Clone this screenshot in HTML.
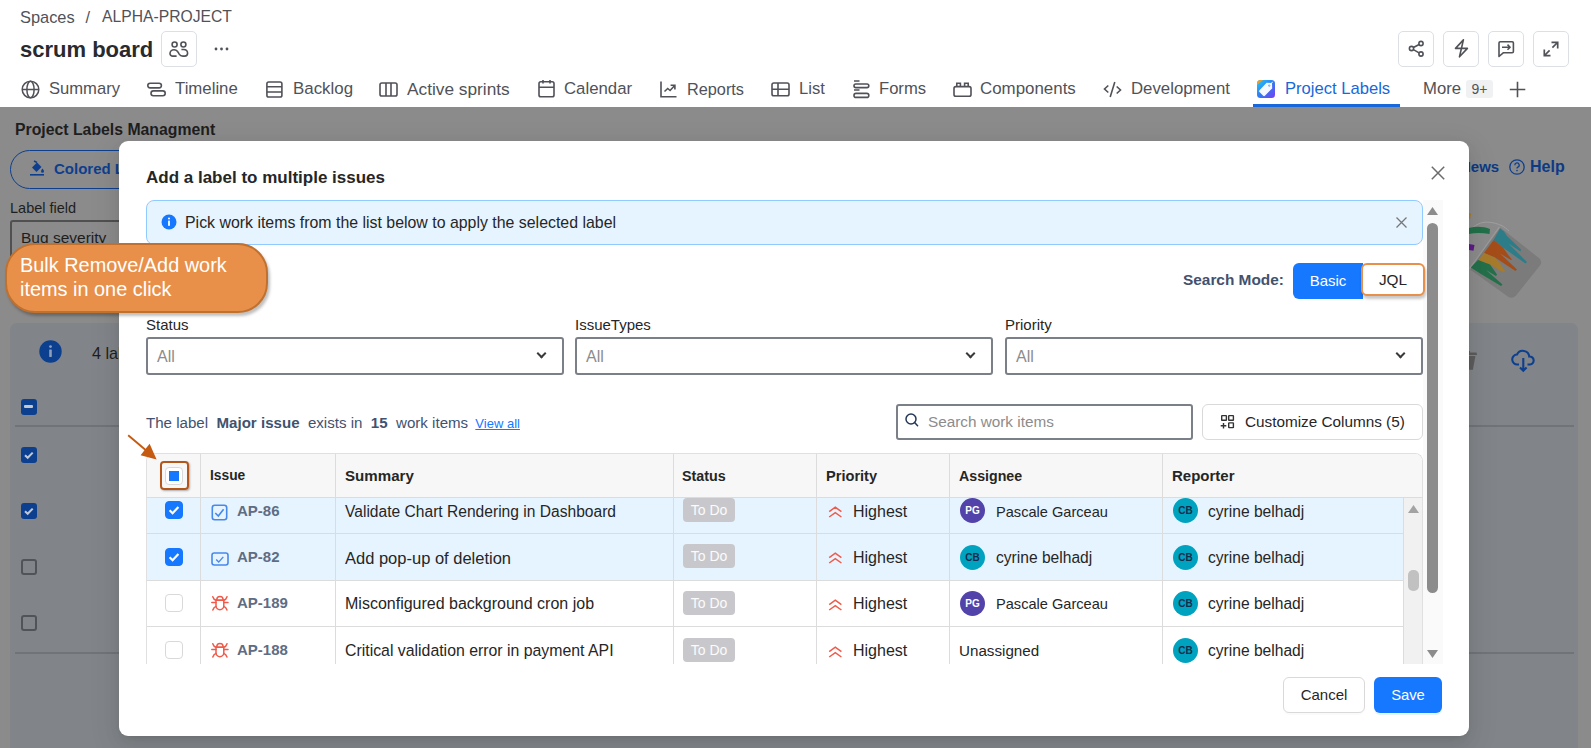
<!DOCTYPE html>
<html><head><meta charset="utf-8">
<style>
*{box-sizing:border-box;margin:0;padding:0}
html,body{width:1591px;height:748px;overflow:hidden;background:#fff}
body{position:relative;font-family:"Liberation Sans",sans-serif;color:#292a2e}
.a{position:absolute;white-space:nowrap}
.crumb{left:20px;top:7px;font-size:16.9px;color:#505258;line-height:20px}
.title{left:20px;top:37px;font-size:22px;font-weight:bold;color:#292a2e;line-height:26px}
.hbtn{width:36px;height:36px;border:1px solid #dcdfe4;border-radius:5px;background:#fff}
.hbtn svg{position:absolute;left:8px;top:8px}
.nav{top:79px;font-size:16.6px;color:#505258;line-height:20px}
.nav svg{position:absolute;top:1px}
.sel{width:418px;height:38px;border:2px solid #7b7f87;border-radius:3px;background:#fff}
.sel span{position:absolute;left:9px;top:8px;font-size:16px;color:#8c8c8c;line-height:20px}
.sel i{position:absolute;right:17px;top:11px;width:7px;height:7px;border-right:2px solid #3a3a3a;border-bottom:2px solid #3a3a3a;transform:rotate(45deg)}
.th{top:12px;font-size:15.5px;font-weight:bold;color:#262626;line-height:20px}
.td{font-size:16px;color:#262626;line-height:20px}
.key{font-size:15px;font-weight:bold;color:#5e6c84;line-height:20px}
.cb{width:18px;height:18px;border:1px solid #d9d9d9;border-radius:4px;background:#fff}
.cb.on{background:#1677ff;border-color:#1677ff}
.pill{width:52px;height:24px;background:#c8c8cc;border-radius:4px;color:#fbfbfb;font-size:14px;line-height:24px;text-align:center}
.av{width:25px;height:25px;border-radius:50%;font-size:10px;font-weight:bold;text-align:center;line-height:25px}
.pg{background:#5243aa;color:#fff}
.cbv{background:#00a3bf;color:#172b4d}
.bcb{width:15.5px;height:15.5px;background:#0d3f8f;border-radius:3px}
.modal{left:119px;top:141px;width:1350px;height:595px;background:#fff;border-radius:9px;box-shadow:0 6px 16px rgba(0,0,0,.08),0 3px 6px -4px rgba(0,0,0,.12),0 9px 28px 8px rgba(0,0,0,.05)}
</style></head>
<body>
<!-- header -->
<div class="a crumb" style="font-size:16.4px">Spaces</div><div class="a crumb" style="left:85.5px;font-size:16.4px">/</div><div class="a crumb" style="left:102px;font-size:15.7px">ALPHA-PROJECT</div>
<div class="a title">scrum board</div>
<div class="a hbtn" style="left:161px;top:31px"></div>
<div class="a hbtn" style="left:1398px;top:31px"></div>
<div class="a hbtn" style="left:1443px;top:31px"></div>
<div class="a hbtn" style="left:1488px;top:31px"></div>
<div class="a hbtn" style="left:1533px;top:31px"></div>

<div class="a nav" style="left:49px;font-size:16.6px">Summary</div>
<div class="a nav" style="left:175px;font-size:16.8px">Timeline</div>
<div class="a nav" style="left:293px;font-size:16.9px">Backlog</div>
<div class="a nav" style="left:407px;font-size:17.3px">Active sprints</div>
<div class="a nav" style="left:564px;font-size:16.8px">Calendar</div>
<div class="a nav" style="left:687px;font-size:16.3px">Reports</div>
<div class="a nav" style="left:799px;font-size:16.6px">List</div>
<div class="a nav" style="left:879px;font-size:16.6px">Forms</div>
<div class="a nav" style="left:980px;font-size:16.9px">Components</div>
<div class="a nav" style="left:1131px;font-size:16.8px">Development</div>
<div class="a nav" style="left:1285px;font-size:16.6px;color:#1868db">Project Labels</div>
<div class="a" style="left:1253px;top:104px;width:147px;height:3px;background:#1868db"></div>
<div class="a nav" style="left:1423px;font-size:16.7px">More</div>
<div class="a" style="left:1466px;top:80px;width:27px;height:18px;background:#f0f1f2;border-radius:3px;font-size:14px;color:#505258;text-align:center;line-height:18px">9+</div>

<!-- header icons -->
<svg class="a" style="left:169px;top:40px" width="20" height="18" viewBox="0 0 20 18" fill="none" stroke="#505258" stroke-width="1.6"><circle cx="5.6" cy="4.5" r="2.5"/><circle cx="14.4" cy="4.5" r="2.5"/><path d="M7.6 16.1H3.8C2.2 16.1 1 15 1 13.4 1 11.3 2.8 9.7 5 9.7c1.8 0 3.2.9 4.2 2.7l1 1.8c.8 1.3 1.8 1.9 3.6 1.9h1.8c1.7 0 3-1 3-2.8 0-2.1-1.7-3.7-4-3.8h-2.2"/></svg>
<svg class="a" style="left:213px;top:46px" width="18" height="6" viewBox="0 0 18 6" fill="#505258"><circle cx="3" cy="3" r="1.4"/><circle cx="8.5" cy="3" r="1.4"/><circle cx="14" cy="3" r="1.4"/></svg>
<svg class="a" style="left:1406px;top:39px" width="20" height="20" viewBox="0 0 20 20" fill="none" stroke="#505258" stroke-width="1.6"><circle cx="15" cy="4.5" r="2.1"/><circle cx="5.5" cy="9.5" r="2.1"/><circle cx="15" cy="15" r="2.1"/><path d="M7.4 8.5l5.7-3M7.4 10.6l5.7 3.3"/></svg>
<svg class="a" style="left:1452px;top:38px" width="20" height="21" viewBox="0 0 20 21" fill="none" stroke="#505258" stroke-width="1.6" stroke-linejoin="round"><path d="M11.4 1.9L3.5 10.4H15.4L7.5 18.8Z"/></svg>
<svg class="a" style="left:1496px;top:39px" width="20" height="20" viewBox="0 0 20 20" fill="none" stroke="#505258" stroke-width="1.6" stroke-linejoin="round"><path d="M3 14.5V4a1.2 1.2 0 0 1 1.2-1.2h12a1.2 1.2 0 0 1 1.2 1.2v8.5a1.2 1.2 0 0 1-1.2 1.2H7.5L3 17.5V14"/><path d="M6 8.2h8M11.5 5.6l2.6 2.6-2.6 2.6"/></svg>
<svg class="a" style="left:1541px;top:39px" width="20" height="20" viewBox="0 0 20 20" fill="none" stroke="#505258" stroke-width="1.7"><path d="M3.5 16.5L8.6 11.4M11.4 8.6L16.5 3.5M10.5 3.3h6.2v6.2M3.3 10.5v6.2h6.2"/></svg>
<!-- nav icons -->
<svg class="a" style="left:21px;top:80px" width="19" height="19" viewBox="0 0 19 19" fill="none" stroke="#505258" stroke-width="1.5"><circle cx="9.5" cy="9.5" r="8.3"/><ellipse cx="9.5" cy="9.5" rx="3.6" ry="8.3"/><path d="M1.2 9.5h16.6"/></svg>
<svg class="a" style="left:146px;top:82px" width="21" height="16" viewBox="0 0 21 16" fill="none" stroke="#505258" stroke-width="1.6"><rect x="1.8" y="1.3" width="13.6" height="4.6" rx="2.3"/><rect x="5" y="8.9" width="14.2" height="4.8" rx="2.4"/></svg>
<svg class="a" style="left:266px;top:81px" width="17" height="17" viewBox="0 0 17 17" fill="none" stroke="#505258" stroke-width="1.6"><rect x=".9" y="1" width="15" height="15" rx="1.8"/><path d="M1 5.8h15M1 11h15"/></svg>
<svg class="a" style="left:379px;top:82px" width="19" height="15" viewBox="0 0 19 15" fill="none" stroke="#505258" stroke-width="1.6"><rect x="1" y="1" width="17" height="13" rx="1.8"/><path d="M7 1v13M12 1v13"/></svg>
<svg class="a" style="left:538px;top:79px" width="17" height="19" viewBox="0 0 17 19" fill="none" stroke="#505258" stroke-width="1.6"><rect x="1" y="2.8" width="15" height="15" rx="1.8"/><path d="M1 8.2h15M5 1v3.5M12 1v3.5"/></svg>
<svg class="a" style="left:660px;top:81px" width="17" height="17" viewBox="0 0 17 17" fill="none" stroke="#505258" stroke-width="1.6"><path d="M1 .5V15.8h15.5"/><path d="M4.5 10.5l3.2-3 2.4 2 4.6-5M10.6 4.2h4.3v4.2"/></svg>
<svg class="a" style="left:771px;top:82px" width="19" height="15" viewBox="0 0 19 15" fill="none" stroke="#505258" stroke-width="1.6"><rect x="1" y="1" width="17" height="12.8" rx="1.8"/><path d="M1 7.2h17M7 1v12.8"/></svg>
<svg class="a" style="left:853px;top:80px" width="17" height="19" viewBox="0 0 17 19" fill="none" stroke="#505258" stroke-width="1.6"><path d="M1 1h5.5M1 10h5.5"/><rect x="1" y="4" width="14.8" height="3.6" rx="1.8"/><rect x="1" y="13.4" width="14.8" height="4" rx="2"/></svg>
<svg class="a" style="left:953px;top:82px" width="19" height="15" viewBox="0 0 19 15" fill="none" stroke="#505258" stroke-width="1.6"><rect x="1" y="4.6" width="17" height="9.6" rx="1.8"/><path d="M3.8 4.6V1.2h3.6v3.4M11.6 4.6V1.2h3.6v3.4"/></svg>
<svg class="a" style="left:1103px;top:81px" width="19" height="17" viewBox="0 0 19 17" fill="none" stroke="#505258" stroke-width="1.6"><path d="M5.3 4.5L1.5 8l3.8 3.5M13.7 5.5L17.5 9l-3.8 3.5M11.8 1L7.2 16"/></svg>
<svg class="a" style="left:1257px;top:80px" width="18" height="18" viewBox="0 0 18 18"><defs><linearGradient id="pl" x1="0" y1="0" x2="1" y2="1"><stop offset="0" stop-color="#1fd0f7"/><stop offset=".5" stop-color="#2f7bf5"/><stop offset="1" stop-color="#7b3cf0"/></linearGradient></defs><rect width="18" height="18" rx="3.5" fill="url(#pl)"/><path d="M0 5V3.5A3.5 3.5 0 0 1 3.5 0H6z" fill="#f59a1c"/><path d="M9.6 2.8l5.4.2.2 5.4-7.3 7.3a1.2 1.2 0 0 1-1.7 0L2.5 12a1.2 1.2 0 0 1 0-1.7z" fill="#fff" opacity=".95"/><circle cx="12.3" cy="5.6" r="1.1" fill="#5aa0f7"/><path d="M12.5 5.4l3.2-3.6" stroke="#fff" stroke-width="1"/></svg>
<svg class="a" style="left:1509px;top:81px" width="17" height="17" viewBox="0 0 17 17" fill="none" stroke="#505258" stroke-width="1.6"><path d="M8.5 .8v15.5M.8 8.5h15.5"/></svg>
<!-- background page (pre-dimmed colours) -->
<div class="a" style="left:0;top:107px;width:1591px;height:641px;background:#8b8b8b"></div>
<div class="a" style="left:15px;top:121px;font-size:15.8px;font-weight:bold;color:#1e1e1e;line-height:18px">Project Labels Managment</div>
<div class="a" style="left:10px;top:150px;width:160px;height:39px;border:1.5px solid #0e3f8e;border-radius:20px"></div>
<svg class="a" style="left:30px;top:160px" width="15" height="16" viewBox="0 0 15 16"><path d="M2 7.5L7 2.5l4.5 4.5-5 5z" fill="#0e3f8e"/><path d="M4 1l3 1.5" stroke="#0e3f8e" stroke-width="1.4"/><path d="M12.5 8.5c.8 1.2 1.5 2 1.5 2.7a1.5 1.5 0 0 1-3 0c0-.7.7-1.5 1.5-2.7z" fill="#0e3f8e"/><rect x="0" y="14" width="14" height="1.6" fill="#0e3f8e"/></svg>
<div class="a" style="left:54px;top:160px;font-size:15px;font-weight:bold;color:#0e3f8e;line-height:18px">Colored Labels</div>
<div class="a" style="left:10px;top:199px;font-size:14.5px;color:#1e1e1e;line-height:18px">Label field</div>
<div class="a" style="left:10px;top:220px;width:200px;height:38px;border:2px solid #505050;border-radius:3px"></div>
<div class="a" style="left:21px;top:229px;font-size:15.5px;color:#1e1e1e;line-height:18px">Bug severity</div>
<div class="a" style="left:1460px;top:158px;font-size:15px;font-weight:bold;color:#0c3a85;line-height:18px">News</div>
<svg class="a" style="left:1509px;top:159px" width="16" height="16" viewBox="0 0 16 16"><circle cx="8" cy="8" r="7.2" fill="none" stroke="#0e3f8e" stroke-width="1.3"/><path d="M5.8 6.2a2.2 2.2 0 1 1 3 2c-.6.3-.8.6-.8 1.3" fill="none" stroke="#0e3f8e" stroke-width="1.3"/><circle cx="8" cy="11.6" r=".8" fill="#0e3f8e"/></svg>
<div class="a" style="left:1530px;top:158px;font-size:16px;font-weight:bold;color:#0c3a85;line-height:18px">Help</div>
<!-- paint bucket -->
<svg class="a" style="left:1462px;top:200px" width="90" height="110" viewBox="1462 200 90 110">
 <path d="M1470.8 229.4C1477 223 1484 221.5 1490 222.3C1498 223.3 1505 226.5 1509 231" fill="none" stroke="#a0a0a0" stroke-width="1"/>
 <path d="M1499.5 227L1539.5 258.5Q1542.5 262 1540 265.5L1516 295.5Q1512.7 299 1508.5 297L1469.4 269Z" fill="#7b7b7b"/>
 <path d="M1499.5 227L1469.4 269" stroke="#9a9a9a" stroke-width="1.3"/>
 <path d="M1500 228.5L1504 231.5L1507 236L1521 249.5L1520.5 251.5L1508.5 243.5L1527 262L1525.5 263.5L1503 247.5L1493.6 240Z" fill="#2d7d89"/>
 <path d="M1493.6 240L1503 247.5L1509 256L1512 259.5L1511 260L1500 253.5L1517 269.5L1515.5 271L1495 257.5L1484 253Z" fill="#a54d18"/>
 <path d="M1484 253L1495 257.5L1499 262L1505 271L1503.5 272.5L1490 264.5L1478 260Z" fill="#a67b2b"/>
 <path d="M1478 260L1490 264.5L1497 274.5L1496 276L1486 270L1502.5 284.5L1501 286L1481 274L1470.8 267.6Z" fill="#23704a"/>
 <path d="M1469 228C1476 226 1484 226.5 1490 229L1489.5 234C1482 232.5 1475 232.5 1469 234Z" fill="#23704a"/>
 <path d="M1469 244L1474.5 245L1473.5 250.7L1469 250Z" fill="#5d1a8a"/>
 <path d="M1469 213L1471.2 213.5L1470 219L1469 219Z" fill="#a67b2b"/>
</svg>
<!-- lower panel -->
<div class="a" style="left:10px;top:323px;width:1568px;height:440px;background:#818589;border-radius:7px"></div>
<svg class="a" style="left:39px;top:340px" width="23" height="23" viewBox="0 0 23 23"><circle cx="11.5" cy="11.5" r="11.2" fill="#0d3f8f"/><rect x="10.2" y="9.6" width="2.6" height="7.4" rx=".4" fill="#8f9fb8"/><circle cx="11.5" cy="6.6" r="1.4" fill="#8f9fb8"/></svg>
<div class="a" style="left:92px;top:344px;font-size:16.2px;color:#1e1e1e;line-height:18px">4 labels</div>
<div class="a" style="left:15px;top:425px;width:1559px;height:2px;background:#707478"></div>
<div class="a" style="left:15px;top:652px;width:1559px;height:2px;background:#707478"></div>
<div class="a bcb" style="left:21px;top:399px"><div class="a" style="left:3px;top:6px;width:9px;height:3px;background:#c3c8d0;border-radius:1px"></div></div>
<div class="a bcb" style="left:21px;top:447px"><svg width="16" height="16" viewBox="0 0 16 16" style="position:absolute;left:0;top:0"><path d="M4 8.2l2.7 2.6 5-5.2" fill="none" stroke="#c3c8d0" stroke-width="2"/></svg></div>
<div class="a bcb" style="left:21px;top:503px"><svg width="16" height="16" viewBox="0 0 16 16" style="position:absolute;left:0;top:0"><path d="M4 8.2l2.7 2.6 5-5.2" fill="none" stroke="#c3c8d0" stroke-width="2"/></svg></div>
<div class="a" style="left:21px;top:559px;width:15.5px;height:15.5px;border:2px solid #505358;border-radius:3px"></div>
<div class="a" style="left:21px;top:615px;width:15.5px;height:15.5px;border:2px solid #505358;border-radius:3px"></div>
<svg class="a" style="left:1455px;top:351px" width="24" height="20" viewBox="0 0 24 20"><path d="M2 1.5h19.5l.6 2.6H2z" fill="#5c5c5c"/><path d="M9 0h6v2H9z" fill="#5c5c5c"/><path d="M4 5h16.4l-2.5 13.8H6z" fill="#5c5c5c"/></svg>
<svg class="a" style="left:1511px;top:349px" width="25" height="24" viewBox="0 0 25 24" fill="none" stroke="#0d3f8f" stroke-width="2.1"><path d="M8 15.5H6.5a5 5 0 0 1-.5-10 6.5 6.5 0 0 1 12.3 2 4 4 0 0 1 .7 8H16.5"/><path d="M12.3 9v12.5M9 18.5l3.3 3.3 3.3-3.3"/></svg>
<div class="a modal"></div>
<div class="a" style="left:146px;top:167px;font-size:17px;font-weight:bold;color:#262626;line-height:22px">Add a label to multiple issues</div>
<svg class="a" style="left:1431px;top:166px" width="14" height="14" viewBox="0 0 14 14"><path d="M.8 .8L13.2 13.2M13.2 .8L.8 13.2" stroke="#6b6b6b" stroke-width="1.5"/></svg>

<!-- info bar -->
<div class="a" style="left:146px;top:200px;width:1277px;height:45px;background:#e6f4ff;border:1px solid #91caff;border-radius:8px"></div>
<svg class="a" style="left:161px;top:214px" width="16" height="16" viewBox="0 0 16 16"><circle cx="8" cy="8" r="7.5" fill="#1677ff"/><rect x="7.1" y="6.6" width="1.8" height="5.2" fill="#fff"/><circle cx="8" cy="4.6" r="1" fill="#fff"/></svg>
<div class="a" style="left:185px;top:213px;font-size:15.9px;color:#262626;line-height:20px">Pick work items from the list below to apply the selected label</div>
<svg class="a" style="left:1396px;top:217px" width="11" height="11" viewBox="0 0 11 11"><path d="M.5 .5L10.5 10.5M10.5 .5L.5 10.5" stroke="#777" stroke-width="1.3"/></svg>

<!-- search mode -->
<div class="a" style="left:1183px;top:270px;font-size:15.4px;font-weight:bold;color:#42526e;line-height:20px">Search Mode:</div>
<div class="a" style="left:1293px;top:263px;width:70px;height:36px;background:#1677ff;border-radius:6px 0 0 6px;color:#fff;font-size:15px;line-height:36px;text-align:center">Basic</div>
<div class="a" style="z-index:2;left:1361px;top:263px;width:64px;height:33px;background:#fff;border:2px solid #e8904a;border-radius:6px;color:#262626;font-size:15.3px;line-height:29px;text-align:center;box-shadow:1px 3px 3px rgba(0,0,0,.22)">JQL</div>

<!-- filters -->
<div class="a" style="left:146px;top:315px;font-size:15px;color:#262626;line-height:19px">Status</div>
<div class="a sel" style="left:146px;top:337px"><span>All</span><i></i></div>
<div class="a" style="left:575px;top:315px;font-size:15px;color:#262626;line-height:19px">IssueTypes</div>
<div class="a sel" style="left:575px;top:337px"><span>All</span><i></i></div>
<div class="a" style="left:1005px;top:315px;font-size:15px;color:#262626;line-height:19px">Priority</div>
<div class="a sel" style="left:1005px;top:337px"><span>All</span><i></i></div>

<!-- label summary -->
<div class="a" style="left:146px;top:413px;font-size:15.1px;color:#42526e;line-height:20px">The label&nbsp; <b>Major issue</b>&nbsp; exists in&nbsp; <b>15</b>&nbsp; work items&nbsp;<span style="font-size:13px;color:#1677ff;text-decoration:underline;margin-left:3px">View all</span></div>
<div class="a" style="left:896px;top:404px;width:297px;height:36px;border:2px solid #7b7f87;border-radius:3px"></div>
<svg class="a" style="left:905px;top:413px" width="14" height="15" viewBox="0 0 14 15"><circle cx="6" cy="6" r="5" fill="none" stroke="#243757" stroke-width="1.5"/><path d="M9.6 9.6L12.6 12.8" stroke="#243757" stroke-width="1.5" stroke-linecap="round"/></svg>
<div class="a" style="left:928px;top:412px;font-size:15.3px;color:#8c8c8c;line-height:20px">Search work items</div>
<div class="a" style="left:1202px;top:404px;width:221px;height:36px;border:1px solid #d9d9d9;border-radius:6px;background:#fff"></div>
<svg class="a" style="left:1220px;top:414px" width="16" height="16" viewBox="0 0 16 16" fill="none" stroke="#333" stroke-width="1.4"><rect x="1.7" y="1.6" width="4.7" height="4.7" rx=".4"/><rect x="8.7" y="1.6" width="4.7" height="4.7" rx=".4"/><rect x="8.7" y="8.9" width="4.7" height="4.7" rx=".4"/><path d="M3.5 8.9v5.6M.7 11.7h5.6"/></svg>
<div class="a" style="left:1245px;top:412px;font-size:15.3px;color:#262626;line-height:20px">Customize Columns (5)</div>

<!-- table -->
<div class="a" id="tbl" style="left:146px;top:453px;width:1277px;height:211px;border:1px solid #e0e0e0;border-bottom:none;border-radius:8px 8px 0 0;overflow:hidden;background:#fff">
<div class="a" style="left:0;top:44px;width:1256px;height:83px;background:#e6f4ff"></div>
<div class="a" style="left:0;top:0;width:1277px;height:44px;background:#f7f7f7;border-bottom:1px solid #dcdcdc"></div>
<div class="a" style="left:0;top:79px;width:1256px;height:1px;background:#dcdcdc"></div>
<div class="a" style="left:0;top:126px;width:1256px;height:1px;background:#dcdcdc"></div>
<div class="a" style="left:0;top:172px;width:1256px;height:1px;background:#dcdcdc"></div>
<div class="a" style="left:53px;top:0;width:1px;height:211px;background:#dcdcdc"></div>
<div class="a" style="left:188px;top:0;width:1px;height:211px;background:#dcdcdc"></div>
<div class="a" style="left:526px;top:0;width:1px;height:211px;background:#dcdcdc"></div>
<div class="a" style="left:669px;top:0;width:1px;height:211px;background:#dcdcdc"></div>
<div class="a" style="left:802px;top:0;width:1px;height:211px;background:#dcdcdc"></div>
<div class="a" style="left:1015px;top:0;width:1px;height:211px;background:#dcdcdc"></div>
<div class="a th" style="left:63px;font-size:13.8px">Issue</div>
<div class="a th" style="left:198px;font-size:15.1px">Summary</div>
<div class="a th" style="left:535px;font-size:14.3px">Status</div>
<div class="a th" style="left:679px;font-size:14.6px">Priority</div>
<div class="a th" style="left:812px;font-size:14.2px">Assignee</div>
<div class="a th" style="left:1025px;font-size:15px">Reporter</div>
<div class="a" style="left:13px;top:7px;width:29px;height:29px;border:2px solid #b4561a;border-radius:4px;box-shadow:1px 1px 2px rgba(0,0,0,.3)"></div>
<div class="a cb" style="left:18px;top:13px;border-color:#d9d9d9"><div class="a" style="left:3px;top:3px;width:10px;height:10px;background:#1677ff"></div></div>
<div class="a cb on" style="left:18px;top:47px"><svg width="18" height="18" viewBox="0 0 18 18" style="position:absolute;left:-1px;top:-1px"><path d="M4.6 9.2l3 3 5.8-6.2" fill="none" stroke="#fff" stroke-width="2.2"/></svg></div>
<svg class="a" style="left:64px;top:50px" width="17" height="17" viewBox="0 0 17 17"><rect x="1.3" y="1.3" width="14.4" height="14.4" rx="2.4" fill="none" stroke="#4688ec" stroke-width="1.6"/><path d="M4.3 9l3 3 5.3-6.8" fill="none" stroke="#4688ec" stroke-width="1.6"/></svg>
<div class="a key" style="left:90px;top:47px">AP-86</div>
<div class="a td" style="left:198px;top:48px;font-size:15.6px">Validate Chart Rendering in Dashboard</div>
<div class="a pill" style="left:536px;top:44px">To Do</div>
<svg class="a" style="left:681px;top:52px" width="15" height="13" viewBox="0 0 15 13" fill="none" stroke="#ee5b4b" stroke-width="1.5"><path d="M1.2 5.6L7.3 1.2 13.4 5.6M1.2 11L7.3 6.6 13.4 11"/></svg>
<div class="a td" style="left:706px;top:48px">Highest</div>
<div class="a av pg" style="left:813px;top:44px">PG</div>
<div class="a td" style="left:849px;top:48px;font-size:14.6px">Pascale Garceau</div>
<div class="a av cbv" style="left:1026px;top:44px">CB</div>
<div class="a td" style="left:1061px;top:48px;font-size:15.6px">cyrine belhadj</div>
<div class="a cb on" style="left:18px;top:93.5px"><svg width="18" height="18" viewBox="0 0 18 18" style="position:absolute;left:-1px;top:-1px"><path d="M4.6 9.2l3 3 5.8-6.2" fill="none" stroke="#fff" stroke-width="2.2"/></svg></div>
<svg class="a" style="left:64px;top:98px" width="18" height="14" viewBox="0 0 18 14"><rect x="1" y="1" width="16" height="12" rx="2.2" fill="none" stroke="#4688ec" stroke-width="1.6"/><path d="M5.2 7.6l2.5 2.5 4.6-5.2" fill="none" stroke="#4688ec" stroke-width="1.4"/></svg>
<div class="a key" style="left:90px;top:92.5px">AP-82</div>
<div class="a td" style="left:198px;top:93.5px;font-size:16.5px">Add pop-up of deletion</div>
<div class="a pill" style="left:536px;top:90px">To Do</div>
<svg class="a" style="left:681px;top:98px" width="15" height="13" viewBox="0 0 15 13" fill="none" stroke="#ee5b4b" stroke-width="1.5"><path d="M1.2 5.6L7.3 1.2 13.4 5.6M1.2 11L7.3 6.6 13.4 11"/></svg>
<div class="a td" style="left:706px;top:93.5px">Highest</div>
<div class="a av cbv" style="left:813px;top:91px">CB</div>
<div class="a td" style="left:849px;top:93.5px;font-size:15.6px">cyrine belhadj</div>
<div class="a av cbv" style="left:1026px;top:91px">CB</div>
<div class="a td" style="left:1061px;top:93.5px;font-size:15.6px">cyrine belhadj</div>
<div class="a cb" style="left:18px;top:140px"></div>
<svg class="a" style="left:64px;top:141px" width="18" height="17" viewBox="0 0 18 17" fill="none" stroke="#ee5b4b" stroke-width="1.5" stroke-linecap="round"><path d="M5.8 5.3V4.6a3.1 3.1 0 0 1 6.3 0v.7z"/><path d="M5 5.2h7.8v5.6a3.9 3.9 0 0 1-7.8 0z"/><path d="M1.8 1.8c.5 1.8 1.6 3 3.2 3.4M16 1.8c-.5 1.8-1.6 3-3.2 3.4M.8 7.4H5M17 7.4h-4.2M1.8 15c.6-1.8 1.6-3 3.2-3.6M16 15c-.6-1.8-1.6-3-3.2-3.6"/></svg>
<div class="a key" style="left:90px;top:139px">AP-189</div>
<div class="a td" style="left:198px;top:140px;font-size:16px">Misconfigured background cron job</div>
<div class="a pill" style="left:536px;top:137px">To Do</div>
<svg class="a" style="left:681px;top:145px" width="15" height="13" viewBox="0 0 15 13" fill="none" stroke="#ee5b4b" stroke-width="1.5"><path d="M1.2 5.6L7.3 1.2 13.4 5.6M1.2 11L7.3 6.6 13.4 11"/></svg>
<div class="a td" style="left:706px;top:140px">Highest</div>
<div class="a av pg" style="left:813px;top:137px">PG</div>
<div class="a td" style="left:849px;top:140px;font-size:14.6px">Pascale Garceau</div>
<div class="a av cbv" style="left:1026px;top:137px">CB</div>
<div class="a td" style="left:1061px;top:140px;font-size:15.6px">cyrine belhadj</div>
<div class="a cb" style="left:18px;top:187px"></div>
<svg class="a" style="left:64px;top:188px" width="18" height="17" viewBox="0 0 18 17" fill="none" stroke="#ee5b4b" stroke-width="1.5" stroke-linecap="round"><path d="M5.8 5.3V4.6a3.1 3.1 0 0 1 6.3 0v.7z"/><path d="M5 5.2h7.8v5.6a3.9 3.9 0 0 1-7.8 0z"/><path d="M1.8 1.8c.5 1.8 1.6 3 3.2 3.4M16 1.8c-.5 1.8-1.6 3-3.2 3.4M.8 7.4H5M17 7.4h-4.2M1.8 15c.6-1.8 1.6-3 3.2-3.6M16 15c-.6-1.8-1.6-3-3.2-3.6"/></svg>
<div class="a key" style="left:90px;top:186px">AP-188</div>
<div class="a td" style="left:198px;top:187px;font-size:15.85px">Critical validation error in payment API</div>
<div class="a pill" style="left:536px;top:184px">To Do</div>
<svg class="a" style="left:681px;top:192px" width="15" height="13" viewBox="0 0 15 13" fill="none" stroke="#ee5b4b" stroke-width="1.5"><path d="M1.2 5.6L7.3 1.2 13.4 5.6M1.2 11L7.3 6.6 13.4 11"/></svg>
<div class="a td" style="left:706px;top:187px">Highest</div>
<div class="a td" style="left:812px;top:187px;font-size:15.2px">Unassigned</div>
<div class="a av cbv" style="left:1026px;top:184px">CB</div>
<div class="a td" style="left:1061px;top:187px;font-size:15.6px">cyrine belhadj</div>
<div class="a" style="left:1256px;top:44px;width:21px;height:170px;background:#f1f1f1;border-left:1px solid #dcdcdc"></div>
<svg class="a" style="left:1260px;top:50px" width="13" height="10" viewBox="0 0 13 10"><path d="M6.5 1L12 9H1z" fill="#a3a3a3"/></svg>
<div class="a" style="left:1261px;top:116px;width:11px;height:21px;background:#c1c1c1;border-radius:5px"></div>
</div>
<!-- modal scrollbar -->
<div class="a" style="left:1423px;top:200px;width:20px;height:464px;background:#fafafa"></div>
<div class="a" style="left:1427px;top:223px;width:11px;height:370px;background:#8c8c8c;border-radius:6px"></div>
<svg class="a" style="left:1426px;top:206px" width="13" height="10" viewBox="0 0 13 10"><path d="M6.5 1L12 9H1z" fill="#8c8c8c"/></svg>
<svg class="a" style="left:1426px;top:649px" width="13" height="10" viewBox="0 0 13 10"><path d="M6.5 9L12 1H1z" fill="#8c8c8c"/></svg>

<!-- footer buttons -->
<div class="a" style="left:1283px;top:677px;width:82px;height:36px;border:1px solid #d9d9d9;border-radius:6px;background:#fff;font-size:15px;color:#262626;text-align:center;line-height:34px;box-shadow:0 2px 0 rgba(0,0,0,.02)">Cancel</div>
<div class="a" style="left:1374px;top:677px;width:68px;height:36px;border-radius:6px;background:#1677ff;font-size:14.8px;color:#fff;text-align:center;line-height:36px;box-shadow:0 2px 0 rgba(5,145,255,.1)">Save</div>

<!-- callout -->
<div class="a" style="left:5px;top:243px;width:263px;height:70px;background:#e8904a;border:2px solid #c0712f;border-radius:30px;box-shadow:2px 3px 3px rgba(0,0,0,.25)"></div>
<div class="a" style="left:20px;top:253px;font-size:19.9px;color:#fff;line-height:24px">Bulk Remove/Add work<br>items in one click</div>
<!-- annotation arrow -->
<svg class="a" style="left:120px;top:428px" width="45" height="40" viewBox="120 428 45 40"><path d="M128.2 435.2L148 452" stroke="#c55a11" stroke-width="1.9"/><path d="M149.6 443.8L140.6 455.2L156.6 459.6Z" fill="#c55a11"/></svg>
</body></html>
